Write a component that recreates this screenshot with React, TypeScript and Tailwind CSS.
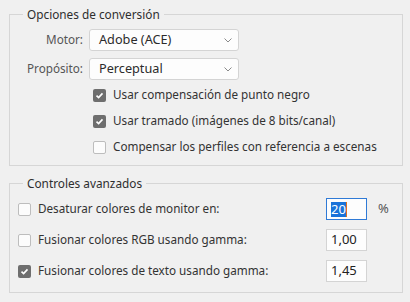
import React from 'react';

const font = { fontFamily: '"Noto Sans", "Segoe UI", sans-serif' };

const Check: React.FC<{ checked?: boolean }> = ({ checked }) =>
  checked ? (
    <span className="flex h-[13px] w-[13px] shrink-0 items-center justify-center rounded-[2px] bg-[#6e6e6e]">
      <svg width="9" height="9" viewBox="0 0 9 9">
        <path d="M1.5 4.6 L3.6 6.6 L7.5 2.4" fill="none" stroke="#fff" strokeWidth="1.6" />
      </svg>
    </span>
  ) : (
    <span className="h-[13px] w-[13px] shrink-0 rounded-[2px] border border-[#bdbdbd] bg-[#fcfcfc]" />
  );

const Select: React.FC<{ value: string }> = ({ value }) => (
  <div className="flex h-[22px] w-[150px] items-center justify-between rounded-[3px] border border-[#d4d4d4] bg-[#fdfdfd] pl-[9px] pr-[6px] text-[12.7px] text-[#2b2b2b]">
    <span>{value}</span>
    <svg width="8" height="5" viewBox="0 0 8 5">
      <path d="M0.5 0.5 L4 4 L7.5 0.5" fill="none" stroke="#8a8a8a" strokeWidth="1" />
    </svg>
  </div>
);

const CheckRow: React.FC<{ checked?: boolean; label: string }> = ({ checked, label }) => (
  <div className="flex h-[26px] items-center gap-[7px] pl-[83px]">
    <Check checked={checked} />
    <span>{label}</span>
  </div>
);

const App: React.FC = () => {
  return (
    <div className="h-[302px] w-[410px] overflow-hidden bg-[#f0f0f0] pt-[6px] text-[11.7px] text-[#333]" style={font}>
      {/* Opciones de conversión */}
      <fieldset className="ml-[9px] w-[394px] border border-[#d6d6d6] pb-[5px]">
        <legend className="ml-[13px] px-[4px] leading-[16px] text-[11.8px] text-[#2e2e2e]">
          Opciones de conversión
        </legend>
        <div className="flex flex-col gap-[7px] pt-[7px]">
          <div className="flex items-center gap-[6px]">
            <span className="w-[73px] text-right text-[#555]">Motor:</span>
            <Select value="Adobe (ACE)" />
          </div>
          <div className="flex items-center gap-[6px]">
            <span className="w-[73px] text-right text-[#555]">Propósito:</span>
            <Select value="Perceptual" />
          </div>
        </div>
        <div className="pt-[2px]">
          <CheckRow checked label="Usar compensación de punto negro" />
          <CheckRow checked label="Usar tramado (imágenes de 8 bits/canal)" />
          <CheckRow label="Compensar los perfiles con referencia a escenas" />
        </div>
      </fieldset>

      {/* Controles avanzados */}
      <fieldset className="ml-[9px] mt-[9px] w-[394px] border border-[#d6d6d6] pb-[10px]">
        <legend className="ml-[13px] px-[4px] leading-[16px] text-[11.8px] text-[#2e2e2e]">
          Controles avanzados
        </legend>
        <div className="flex flex-col gap-[9px] pl-[8px] pt-[7px]">
          <div className="flex h-[22px] items-center">
            <Check />
            <span className="ml-[7px] w-[288px]">Desaturar colores de monitor en:</span>
            <div className="flex h-[22px] w-[41px] items-center border border-[#2f7ad6] bg-[#fdfdfd] pl-[4px] text-[13px]">
              <span className="bg-[#1a73d9] leading-[15px] text-white">20</span>
              <span className="h-[15px] w-px bg-[#e0701e]" />
            </div>
            <span className="ml-[11px] text-[13px] text-[#555]">%</span>
          </div>
          <div className="flex h-[22px] items-center">
            <Check />
            <span className="ml-[7px] w-[288px]">Fusionar colores RGB usando gamma:</span>
            <div className="flex h-[22px] w-[41px] items-center border border-[#d4d4d4] bg-[#fdfdfd] pl-[4px] text-[13px] text-[#222]">
              1,00
            </div>
          </div>
          <div className="flex h-[22px] items-center">
            <Check checked />
            <span className="ml-[7px] w-[288px]">Fusionar colores de texto usando gamma:</span>
            <div className="flex h-[22px] w-[41px] items-center border border-[#d4d4d4] bg-[#fdfdfd] pl-[4px] text-[13px] text-[#222]">
              1,45
            </div>
          </div>
        </div>
      </fieldset>
    </div>
  );
};

export default App;
